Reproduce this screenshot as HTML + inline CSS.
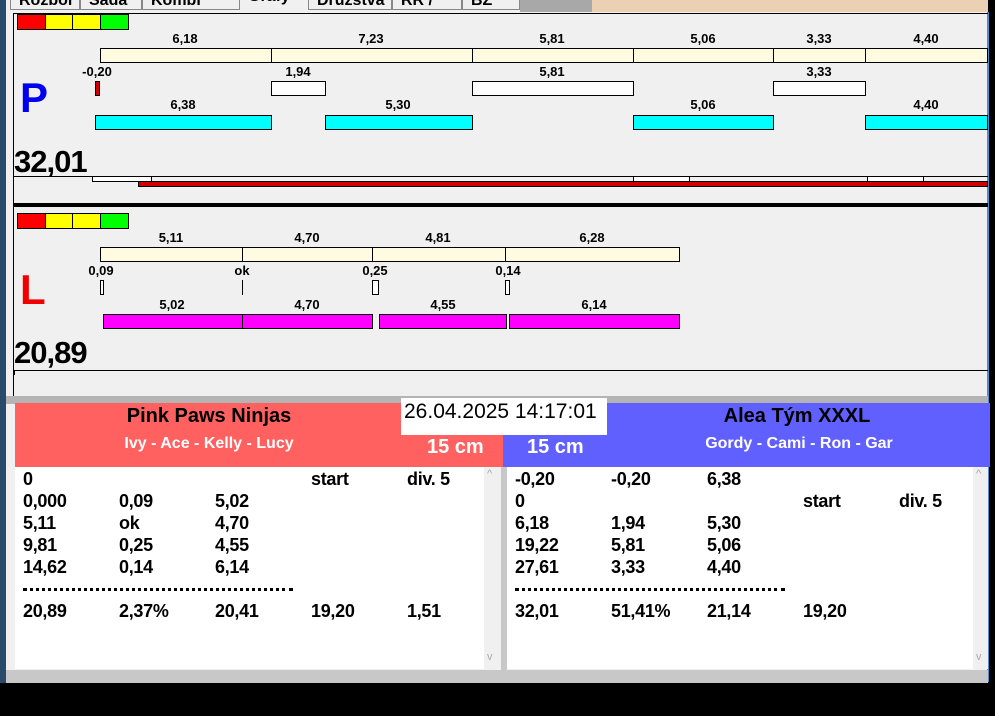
<!DOCTYPE html>
<html><head><meta charset="utf-8"><style>
*{margin:0;padding:0;box-sizing:border-box}
body{width:995px;height:716px;background:#000;position:relative;overflow:hidden;font-family:"Liberation Sans",sans-serif}
.a{position:absolute}
.t{position:absolute;font-weight:bold;font-size:13px;color:#000;transform:translateX(-50%);white-space:nowrap}
.b{position:absolute;border:1px solid #000}
.cr{background:#fffbe0}
.wh{background:#fff}
.cy{background:#00ffff}
.mg{background:#ff00ff}
.tab{position:absolute;top:-9px;height:19px;background:#f0f0f0;border:1px solid #888;font-size:16px;font-weight:bold;padding:0 8px;line-height:18px;overflow:hidden}
.row{position:absolute;font-size:18px;font-weight:bold;color:#000;white-space:nowrap;letter-spacing:-0.3px}
</style></head><body>
<div class="a" style="left:0;top:0;width:6px;height:683px;background:#2a4a6a"></div>
<div class="a" style="left:6px;top:0;width:984px;height:683px;background:#f0f0f0"></div>
<div class="a" style="left:520px;top:0;width:72px;height:12px;background:#a8a8a8"></div>
<div class="a" style="left:592px;top:0;width:396px;height:12px;background:#ecd0b4"></div>
<div class="tab" style="left:10px;width:70px">Rozbor</div>
<div class="tab" style="left:80px;width:62px">Sada</div>
<div class="tab" style="left:142px;width:98px">Kombi Graf</div>
<div class="tab" style="left:240px;width:68px;top:-12px;border:none">Grafy</div>
<div class="tab" style="left:308px;width:84px">Družstva</div>
<div class="tab" style="left:392px;width:70px">RR / OT</div>
<div class="tab" style="left:462px;width:58px">BZ</div>
<div class="a" style="left:988px;top:0;width:7px;height:683px;background:#000"></div>
<div class="a" style="left:987px;top:12px;width:2px;height:670px;background:#4a90d0"></div>
<div class="a" style="left:6px;top:670px;width:982px;height:13px;background:#c8c8c8"></div>

<!-- P panel -->
<div class="a" style="left:13px;top:13px;width:975px;height:1px;background:#000"></div>
<div class="a" style="left:13px;top:13px;width:1px;height:384px;background:#000"></div>
<div class="b" style="left:17px;top:14px;width:29px;height:16px;background:#f00"></div>
<div class="b" style="left:45px;top:14px;width:28px;height:16px;background:#ff0"></div>
<div class="b" style="left:72px;top:14px;width:29px;height:16px;background:#ff0"></div>
<div class="b" style="left:100px;top:14px;width:29px;height:16px;background:#0f0"></div>

<div class="t" style="left:185px;top:31px">6,18</div>
<div class="t" style="left:371px;top:31px">7,23</div>
<div class="t" style="left:552px;top:31px">5,81</div>
<div class="t" style="left:703px;top:31px">5,06</div>
<div class="t" style="left:819px;top:31px">3,33</div>
<div class="t" style="left:926px;top:31px">4,40</div>
<div class="b cr" style="left:100px;top:48px;width:172px;height:15px"></div>
<div class="b cr" style="left:271px;top:48px;width:202px;height:15px"></div>
<div class="b cr" style="left:472px;top:48px;width:162px;height:15px"></div>
<div class="b cr" style="left:633px;top:48px;width:141px;height:15px"></div>
<div class="b cr" style="left:773px;top:48px;width:93px;height:15px"></div>
<div class="b cr" style="left:865px;top:48px;width:123px;height:15px"></div>

<div class="t" style="left:97px;top:64px">-0,20</div>
<div class="t" style="left:298px;top:64px">1,94</div>
<div class="t" style="left:552px;top:64px">5,81</div>
<div class="t" style="left:819px;top:64px">3,33</div>
<div class="b" style="left:95px;top:81px;width:5px;height:15px;background:#d00000"></div>
<div class="b wh" style="left:271px;top:81px;width:55px;height:15px"></div>
<div class="b wh" style="left:472px;top:81px;width:162px;height:15px"></div>
<div class="b wh" style="left:773px;top:81px;width:93px;height:15px"></div>

<div class="t" style="left:183px;top:97px">6,38</div>
<div class="t" style="left:398px;top:97px">5,30</div>
<div class="t" style="left:703px;top:97px">5,06</div>
<div class="t" style="left:926px;top:97px">4,40</div>
<div class="b cy" style="left:95px;top:115px;width:177px;height:15px"></div>
<div class="b cy" style="left:325px;top:115px;width:148px;height:15px"></div>
<div class="b cy" style="left:633px;top:115px;width:141px;height:15px"></div>
<div class="b cy" style="left:865px;top:115px;width:123px;height:15px"></div>

<div class="a" style="left:20px;top:74px;font-size:42px;font-weight:bold;color:#0000f0">P</div>
<div class="a" style="left:14px;top:144px;font-size:31px;font-weight:bold;letter-spacing:-1px">32,01</div>
<div class="a" style="left:14px;top:176px;width:974px;height:1px;background:#000"></div>
<div class="b wh" style="left:92px;top:176px;width:60px;height:6px"></div>
<div class="b wh" style="left:633px;top:176px;width:57px;height:6px"></div>
<div class="b wh" style="left:867px;top:176px;width:57px;height:6px"></div>
<div class="b" style="left:138px;top:181px;width:850px;height:6px;background:#d00000"></div>
<div class="a" style="left:13px;top:203px;width:975px;height:4px;background:#000"></div>

<!-- L panel -->
<div class="b" style="left:17px;top:213px;width:29px;height:16px;background:#f00"></div>
<div class="b" style="left:45px;top:213px;width:28px;height:16px;background:#ff0"></div>
<div class="b" style="left:72px;top:213px;width:29px;height:16px;background:#ff0"></div>
<div class="b" style="left:100px;top:213px;width:29px;height:16px;background:#0f0"></div>

<div class="t" style="left:171px;top:230px">5,11</div>
<div class="t" style="left:307px;top:230px">4,70</div>
<div class="t" style="left:438px;top:230px">4,81</div>
<div class="t" style="left:592px;top:230px">6,28</div>
<div class="b cr" style="left:100px;top:247px;width:143px;height:15px"></div>
<div class="b cr" style="left:242px;top:247px;width:131px;height:15px"></div>
<div class="b cr" style="left:372px;top:247px;width:134px;height:15px"></div>
<div class="b cr" style="left:505px;top:247px;width:175px;height:15px"></div>

<div class="t" style="left:101px;top:263px">0,09</div>
<div class="t" style="left:242px;top:263px">ok</div>
<div class="t" style="left:375px;top:263px">0,25</div>
<div class="t" style="left:508px;top:263px">0,14</div>
<div class="b wh" style="left:100px;top:280px;width:4px;height:15px"></div>
<div class="a" style="left:242px;top:280px;width:1px;height:15px;background:#000"></div>
<div class="b wh" style="left:372px;top:280px;width:7px;height:15px"></div>
<div class="b wh" style="left:505px;top:280px;width:5px;height:15px"></div>

<div class="t" style="left:172px;top:297px">5,02</div>
<div class="t" style="left:307px;top:297px">4,70</div>
<div class="t" style="left:443px;top:297px">4,55</div>
<div class="t" style="left:594px;top:297px">6,14</div>
<div class="b mg" style="left:103px;top:314px;width:140px;height:15px"></div>
<div class="b mg" style="left:242px;top:314px;width:131px;height:15px"></div>
<div class="b mg" style="left:379px;top:314px;width:128px;height:15px"></div>
<div class="b mg" style="left:509px;top:314px;width:171px;height:15px"></div>

<div class="a" style="left:20px;top:266px;font-size:42px;font-weight:bold;color:#f00000">L</div>
<div class="a" style="left:14px;top:335px;font-size:31px;font-weight:bold;letter-spacing:-1px">20,89</div>
<div class="a" style="left:14px;top:370px;width:974px;height:1px;background:#000"></div>
<div class="a" style="left:14px;top:370px;width:1px;height:5px;background:#000"></div>
<div class="a" style="left:6px;top:396px;width:982px;height:8px;background:#b4b4b4"></div>

<!-- headers -->
<div class="a" style="left:15px;top:403px;width:488px;height:64px;background:#ff6060"></div>
<div class="a" style="left:503px;top:403px;width:487px;height:64px;background:#6060ff"></div>
<div class="a" style="left:401px;top:398px;width:206px;height:37px;background:#fff"></div>
<div class="a" style="left:404px;top:400px;font-size:21px;color:#000">26.04.2025 14:17:01</div>
<div class="t" style="left:209px;top:405px;font-size:20px">Pink Paws Ninjas</div>
<div class="t" style="left:209px;top:435px;font-size:16px;color:#fff">Ivy - Ace - Kelly - Lucy</div>
<div class="a" style="left:427px;top:436px;font-size:20px;font-weight:bold;color:#fff">15 cm</div>
<div class="a" style="left:527px;top:436px;font-size:20px;font-weight:bold;color:#fff">15 cm</div>
<div class="t" style="left:797px;top:405px;font-size:20px">Alea Tým XXXL</div>
<div class="t" style="left:799px;top:435px;font-size:16px;color:#fff">Gordy - Cami - Ron - Gar</div>

<!-- lists -->
<div class="a" style="left:15px;top:467px;width:486px;height:202px;background:#fff"></div>
<div class="a" style="left:484px;top:467px;width:17px;height:202px;background:#f0f0f0"></div>
<div class="a" style="left:501px;top:467px;width:6px;height:203px;background:#c8c8c8"></div>
<div class="a" style="left:507px;top:467px;width:481px;height:202px;background:#fff"></div>
<div class="a" style="left:973px;top:467px;width:15px;height:202px;background:#f0f0f0"></div>
<div class="a" style="left:487px;top:468px;color:#aaa;font-size:11px">^</div>
<div class="a" style="left:487px;top:651px;color:#aaa;font-size:11px">v</div>
<div class="a" style="left:976px;top:468px;color:#aaa;font-size:11px">^</div>
<div class="a" style="left:976px;top:651px;color:#aaa;font-size:11px">v</div>

<div class="row" style="left:23px;top:469px">0</div><div class="row" style="left:311px;top:469px">start</div><div class="row" style="left:407px;top:469px">div. 5</div>
<div class="row" style="left:23px;top:491px">0,000</div><div class="row" style="left:119px;top:491px">0,09</div><div class="row" style="left:215px;top:491px">5,02</div>
<div class="row" style="left:23px;top:513px">5,11</div><div class="row" style="left:119px;top:513px">ok</div><div class="row" style="left:215px;top:513px">4,70</div>
<div class="row" style="left:23px;top:535px">9,81</div><div class="row" style="left:119px;top:535px">0,25</div><div class="row" style="left:215px;top:535px">4,55</div>
<div class="row" style="left:23px;top:557px">14,62</div><div class="row" style="left:119px;top:557px">0,14</div><div class="row" style="left:215px;top:557px">6,14</div>
<div class="a" style="left:23px;top:588px;width:270px;border-top:3px dotted #000"></div>
<div class="row" style="left:23px;top:601px">20,89</div><div class="row" style="left:119px;top:601px">2,37%</div><div class="row" style="left:215px;top:601px">20,41</div><div class="row" style="left:311px;top:601px">19,20</div><div class="row" style="left:407px;top:601px">1,51</div>

<div class="row" style="left:515px;top:469px">-0,20</div><div class="row" style="left:611px;top:469px">-0,20</div><div class="row" style="left:707px;top:469px">6,38</div>
<div class="row" style="left:515px;top:491px">0</div><div class="row" style="left:803px;top:491px">start</div><div class="row" style="left:899px;top:491px">div. 5</div>
<div class="row" style="left:515px;top:513px">6,18</div><div class="row" style="left:611px;top:513px">1,94</div><div class="row" style="left:707px;top:513px">5,30</div>
<div class="row" style="left:515px;top:535px">19,22</div><div class="row" style="left:611px;top:535px">5,81</div><div class="row" style="left:707px;top:535px">5,06</div>
<div class="row" style="left:515px;top:557px">27,61</div><div class="row" style="left:611px;top:557px">3,33</div><div class="row" style="left:707px;top:557px">4,40</div>
<div class="a" style="left:515px;top:588px;width:270px;border-top:3px dotted #000"></div>
<div class="row" style="left:515px;top:601px">32,01</div><div class="row" style="left:611px;top:601px">51,41%</div><div class="row" style="left:707px;top:601px">21,14</div><div class="row" style="left:803px;top:601px">19,20</div>
</body></html>
